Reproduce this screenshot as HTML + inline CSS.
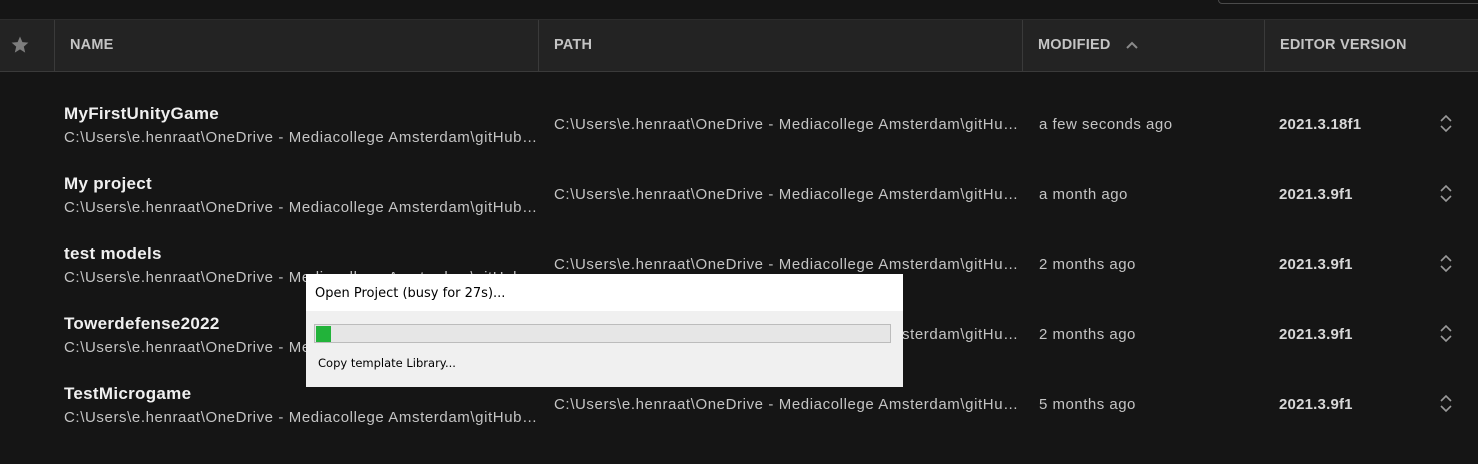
<!DOCTYPE html>
<html><head><meta charset="utf-8"><style>
*{margin:0;padding:0;box-sizing:border-box}
body{width:1478px;height:464px;background:#151515;font-family:"Liberation Sans",sans-serif;overflow:hidden;position:relative}
.topbox{position:absolute;left:1218px;top:-10px;width:280px;height:14px;border:1px solid #4a4a4a;border-radius:4px}
.hdr{position:absolute;left:0;top:19px;width:1478px;height:53px;background:#232323;border-top:1px solid #2c2c2c;border-bottom:1px solid #3a3a3a}
.hdr .d{position:absolute;top:0;height:52px;width:1px;background:#3a3a3a}
.hdr .t{position:absolute;top:17px;font-size:14.5px;font-weight:bold;color:#c4c4c4;letter-spacing:0.2px}
.row{position:absolute;left:0;width:1478px;height:70px}
.nm{position:absolute;left:64px;top:9px;font-size:17px;font-weight:bold;color:#f0f0f0;letter-spacing:0.3px}
.p1{position:absolute;left:64px;top:34px;width:474px;font-size:15px;color:#c4c4c4;white-space:nowrap;overflow:hidden;text-overflow:ellipsis;letter-spacing:0.6px}
.p2{position:absolute;left:554px;top:21px;width:470px;font-size:15px;color:#c4c4c4;white-space:nowrap;overflow:hidden;text-overflow:ellipsis;letter-spacing:0.6px}
.md{position:absolute;left:1039px;top:21px;font-size:15px;color:#c4c4c4;letter-spacing:0.5px}
.ev{position:absolute;left:1279px;top:21px;font-size:15px;font-weight:bold;color:#d8d8d8;letter-spacing:0.2px}
.ar{position:absolute;left:1439px;top:18px}
.dlg{position:absolute;left:306px;top:274px;width:597px;height:113px;background:#f0f0f0}
.dlg .tt{height:37px;background:#fff;font-family:"DejaVu Sans",sans-serif;font-size:13px;color:#000;padding:12px 0 0 9px}
.bar{position:absolute;left:8px;top:50px;width:577px;height:19px;background:#e6e6e6;border:1px solid #bcbcbc}
.bar i{position:absolute;left:1px;top:1px;width:15px;height:16px;background:#22b33a}
.dlg .st{position:absolute;left:12px;top:82px;font-family:"DejaVu Sans",sans-serif;font-size:11.5px;color:#000}
</style></head><body>
<div class="topbox"></div>
<div class="hdr">
<svg style="position:absolute;left:10px;top:15px" width="20" height="20" viewBox="0 0 20 20"><path d="M10 1.5l2.4 5.6 6 .5-4.6 4 1.4 6L10 14.4 4.8 17.6l1.4-6-4.6-4 6-.5z" fill="#7d7d7d"/></svg>
<div class="d" style="left:54px"></div><div class="d" style="left:538px"></div><div class="d" style="left:1022px"></div><div class="d" style="left:1264px"></div>
<div class="t" style="left:70px">NAME</div>
<div class="t" style="left:554px">PATH</div>
<div class="t" style="left:1038px">MODIFIED</div>
<svg style="position:absolute;left:1125px;top:20px" width="14" height="10" viewBox="0 0 14 10"><path d="M2 8l5-5 5 5" stroke="#8a8a8a" stroke-width="2" fill="none"/></svg>
<div class="t" style="left:1280px">EDITOR VERSION</div>
</div>

<div class="row" style="top:95px"><div class="nm">MyFirstUnityGame</div><div class="p1">C:\Users\e.henraat\OneDrive - Mediacollege Amsterdam\gitHub\MyFirstUnityGame</div><div class="p2">C:\Users\e.henraat\OneDrive - Mediacollege Amsterdam\gitHub\MyFirstUnityGame</div><div class="md">a few seconds ago</div><div class="ev">2021.3.18f1</div><svg class="ar" width="14" height="22" viewBox="0 0 14 22"><path d="M2 8l5-5 5 5M2 13l5 5 5-5" stroke="#9a9a9a" stroke-width="1.6" fill="none"/></svg></div>
<div class="row" style="top:165px"><div class="nm">My project</div><div class="p1">C:\Users\e.henraat\OneDrive - Mediacollege Amsterdam\gitHub\My project</div><div class="p2">C:\Users\e.henraat\OneDrive - Mediacollege Amsterdam\gitHub\My project</div><div class="md">a month ago</div><div class="ev">2021.3.9f1</div><svg class="ar" width="14" height="22" viewBox="0 0 14 22"><path d="M2 8l5-5 5 5M2 13l5 5 5-5" stroke="#9a9a9a" stroke-width="1.6" fill="none"/></svg></div>
<div class="row" style="top:235px"><div class="nm">test models</div><div class="p1">C:\Users\e.henraat\OneDrive - Mediacollege Amsterdam\gitHub\test models</div><div class="p2">C:\Users\e.henraat\OneDrive - Mediacollege Amsterdam\gitHub\test models</div><div class="md">2 months ago</div><div class="ev">2021.3.9f1</div><svg class="ar" width="14" height="22" viewBox="0 0 14 22"><path d="M2 8l5-5 5 5M2 13l5 5 5-5" stroke="#9a9a9a" stroke-width="1.6" fill="none"/></svg></div>
<div class="row" style="top:305px"><div class="nm">Towerdefense2022</div><div class="p1">C:\Users\e.henraat\OneDrive - Mediacollege Amsterdam\gitHub\Towerdefense2022</div><div class="p2">C:\Users\e.henraat\OneDrive - Mediacollege Amsterdam\gitHub\Towerdefense2022</div><div class="md">2 months ago</div><div class="ev">2021.3.9f1</div><svg class="ar" width="14" height="22" viewBox="0 0 14 22"><path d="M2 8l5-5 5 5M2 13l5 5 5-5" stroke="#9a9a9a" stroke-width="1.6" fill="none"/></svg></div>
<div class="row" style="top:375px"><div class="nm">TestMicrogame</div><div class="p1">C:\Users\e.henraat\OneDrive - Mediacollege Amsterdam\gitHub\TestMicrogame</div><div class="p2">C:\Users\e.henraat\OneDrive - Mediacollege Amsterdam\gitHub\TestMicrogame</div><div class="md">5 months ago</div><div class="ev">2021.3.9f1</div><svg class="ar" width="14" height="22" viewBox="0 0 14 22"><path d="M2 8l5-5 5 5M2 13l5 5 5-5" stroke="#9a9a9a" stroke-width="1.6" fill="none"/></svg></div>

<div class="dlg">
<div class="tt">Open Project (busy for 27s)...</div>
<div class="bar"><i></i></div>
<div class="st">Copy template Library...</div>
</div>
</body></html>
